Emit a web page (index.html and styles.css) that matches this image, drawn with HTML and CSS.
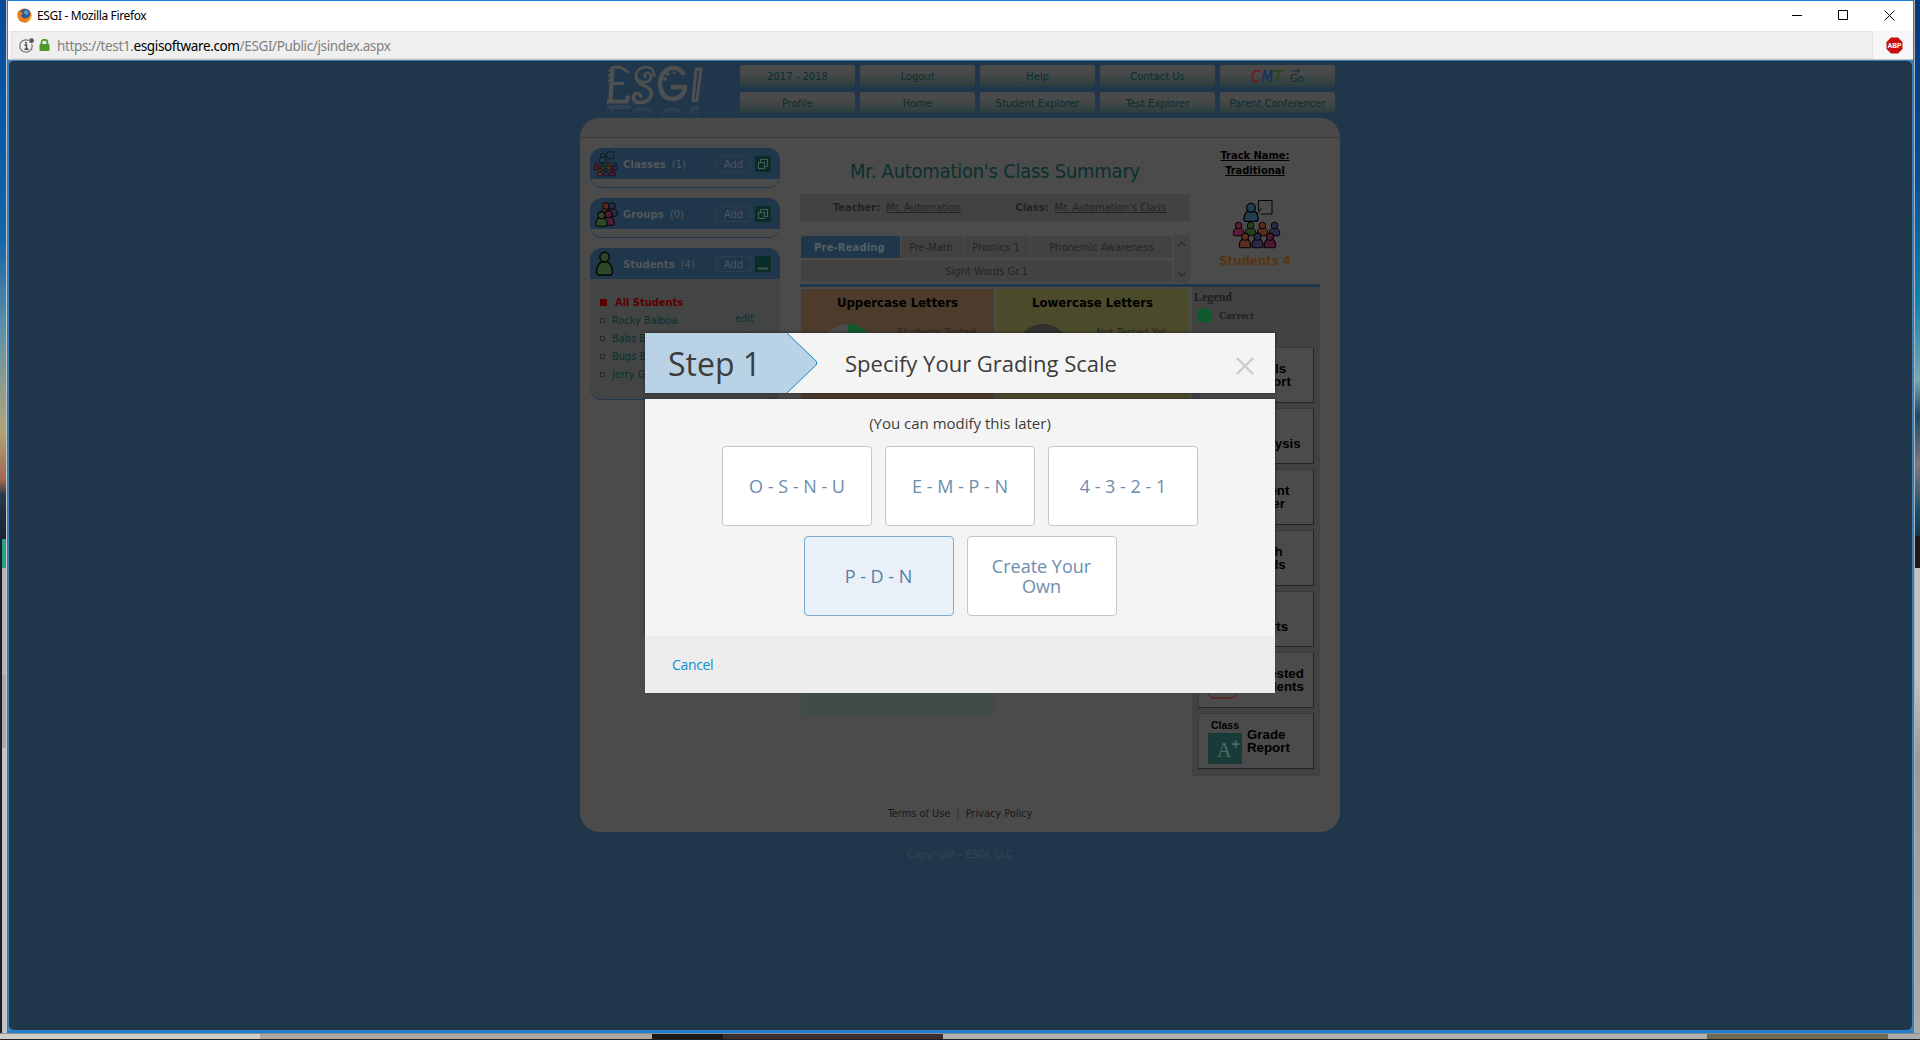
FILE: index.html
```html
<!DOCTYPE html>
<html lang="en">
<head>
<meta charset="utf-8">
<title>ESGI</title>
<link rel="stylesheet" href="styles.css">
</head>
<body>
<svg class="defs" width="0" height="0">
  <defs>
    <symbol id="person" viewBox="0 0 12 15"><path d="M3.3 6.6C1.2 8 .7 10.6.7 12.6q0 1.6 1.5 1.6h7.6q1.5 0 1.5-1.6C11.3 10.6 10.8 8 8.7 6.6z"/><circle cx="6" cy="4" r="3.3"/></symbol>
    <symbol id="class" viewBox="0 0 50 51">
      <path d="M26.500 1.500h13.500v13.500h-11M26.500 1.500v10M29.500 9l-5 7" fill="none" stroke="#050505"/>
      <g stroke="#050505" stroke-width="1">
      <use href="#person" x="11" y="3.500" width="16" height="20" fill="#1f3e50"/>
      <g fill="#5b1c35"><use href="#person" x="0.500" y="21" width="12" height="18"/></g>
      <g fill="#243f22"><use href="#person" x="12.500" y="21" width="12" height="18"/></g>
      <g fill="#5a2d1c"><use href="#person" x="24.500" y="21" width="12" height="18"/></g>
      <g fill="#2a2a48"><use href="#person" x="36.500" y="21" width="12" height="18"/></g>
      <g fill="#5a2d1c"><use href="#person" x="6.500" y="32" width="13" height="19"/></g>
      <g fill="#2a2a48"><use href="#person" x="19" y="32" width="13" height="19"/></g>
      <g fill="#4e1830"><use href="#person" x="31.500" y="32" width="13" height="19"/></g>
      </g>
    </symbol>
    <symbol id="windows" viewBox="0 0 16 16"><rect width="16" height="16" fill="#092e2a"/><path d="M5.500 6V3.500h7v7h-2M3.500 6.500h6v6h-6z" fill="none" stroke="#49605a"/></symbol>
  </defs>
</svg>
<div class="desktop">
  <div class="edge edge-left"></div>
  <div class="window">
    <div class="titlebar">
      <svg width="15" height="15" viewBox="0 0 15 15"><circle cx="7.500" cy="7.500" r="7" fill="#e8641b"/><circle cx="8" cy="6" r="5" fill="#24599e"/><path d="M8 2q4 1 3.500 4Q9 8 7 5z" fill="#4ba7d5"/><path d="M.6 5Q1 3 3 2q0 2 3 3 0 2-2 2 1 4 6 3 3-1 3.500-5 2 9-6 9.500Q0 14 .6 5z" fill="#ee7a1d"/><path d="M10 13q4-2 4-7 1 5-2 7z" fill="#ffd64a"/></svg>
      <span class="wtitle">ESGI - Mozilla Firefox</span>
      <span class="controls">
        <svg width="11" height="11"><path d="M0 5.500h10" stroke="#000"/></svg>
        <svg width="11" height="11"><path d="M.5.500h9v9h-9z" fill="none" stroke="#000"/></svg>
        <svg width="11" height="11"><path d="M.5.500l10 10M10.500.500l-10 10" stroke="#000"/></svg>
      </span>
    </div>
    <div class="urlbar">
      <div class="address">
        <svg width="16" height="15" viewBox="0 0 16 15"><circle cx="7" cy="8" r="6.200" fill="none" stroke="#777" stroke-width="1.300"/><path d="M5.500 7H7.500v4M5.500 11.300h4" stroke="#444" stroke-width="1.400" fill="none"/><circle cx="7" cy="4.700" r="1" fill="#444"/><circle cx="12.500" cy="2.700" r="3" fill="#eee"/><circle cx="12.500" cy="2.700" r="2.400" fill="#555"/></svg>
        <svg class="lock" width="11" height="12" viewBox="0 0 11 12"><path d="M2.500 6V3.500q0-2.700 3-2.700t3 2.700V6" fill="none" stroke="#4e9a28" stroke-width="1.700"/><rect x=".5" y="5" width="10" height="7" rx="1" fill="#4e9a28"/></svg>
        <span class="url">https://test1.<b>esgisoftware.com</b>/ESGI/Public/jsindex.aspx</span>
      </div>
      <svg class="abp" width="17" height="17" viewBox="0 0 17 17"><path d="M5 0.500h7L16.500 5v7L12 16.500H5L.5 12V5z" fill="#c70d0d"/><text x="8.500" y="11.200" text-anchor="middle" textLength="14" lengthAdjust="spacingAndGlyphs">ABP</text></svg>
    </div>
    <div class="page">
      <div class="site">
        <header class="top">
          <svg class="logo" width="104" height="53" viewBox="0 0 104 53">
            <defs><linearGradient id="fade" gradientUnits="userSpaceOnUse" x1="0" y1="39" x2="0" y2="53"><stop offset="0" stop-color="#4a5358" stop-opacity=".5"/><stop offset="1" stop-color="#4a5358" stop-opacity="0"/></linearGradient></defs>
            <g fill="none" stroke="#4d4f50" stroke-linejoin="round">
              <path d="M8.500 2L6.500 36" stroke-width="4.500"/>
              <path d="M8 2.500Q18 0 24.500 8M9 18.500h11" stroke-width="3"/>
              <path d="M3 36.500h20l1-6" stroke-width="4"/>
              <path d="M4 5.500h4M4 10.500h4M4 15.500h4" stroke-width="2"/>
              <path d="M42 13q-3-3 0-5 5-1 5 4-1 6-8 5-8-2-7-8 2-7 11-7 8 1 7 10" stroke-width="2.600"/>
              <path d="M32 12q2 7 11 10 7 4 3 11-5 6-14 4-5-4-1-8 6-2 6 4" stroke-width="3.600"/>
              <path d="M80 10Q76 2 67 3 56 7 56 19q1 15 13 15 11-1 12-12H67" stroke-width="4.500"/>
              <path d="M92 4L89 35.500h4L97 4z" stroke-width="3"/>
            </g>
            <g fill="#4d4f50"><circle cx="61" cy="14" r="2"/><circle cx="64" cy="9" r="1.800"/><circle cx="70" cy="8" r="1.500"/></g>
            <g fill="none" stroke="url(#fade)" stroke-width="4"><path d="M3 42h22v2M7 42v10M31 51q-3-6 5-7 8-1 12 5M36 51q3-2 3 2M57 51q10-13 24 0M90 42.500h4M88 42v10M93 42v10"/></g>
          </svg>
          <nav class="menu">
            <a>2017 - 2018</a><a>Logout</a><a>Help</a><a>Contact Us</a><a class="cmt"><i><b class="c">C</b><b class="m">M</b><b class="t">T</b></i><span class="go">Go<svg width="10" height="4"><path d="M0 2h8M6 0l3 2-3 2" stroke="#0c302e" fill="none"/></svg></span></a>
            <a>Profile</a><a>Home</a><a>Student Explorer</a><a>Test Explorer</a><a>Parent Conferencer</a>
          </nav>
        </header>
        <main class="card">
          <div class="cardtop"></div>
          <div class="columns">
            <aside class="left">
              <section class="panel">
                <h3><svg class="pi" width="26" height="26"><use href="#class"/></svg><b>Classes</b><em>(1)</em><button>Add</button><svg width="16" height="16"><use href="#windows"/></svg></h3>
              </section>
              <section class="panel">
                <h3><svg class="pi" width="26" height="26" viewBox="0 0 26 26" stroke="#050505"><use href="#person" x="7" y="0" width="12" height="17" fill="#5a2d1c"/><use href="#person" x="13" y="0" width="12" height="17" fill="#2a2a48"/><use href="#person" x="9" y="8" width="13" height="18" fill="#541c34"/><use href="#person" x="2" y="9" width="13" height="18" fill="#2b4827"/></svg><b>Groups</b><em>(0)</em><button>Add</button><svg width="16" height="16"><use href="#windows"/></svg></h3>
              </section>
              <section class="panel students">
                <h3><svg class="pi" width="26" height="26" viewBox="0 0 26 26" fill="#2b4827" stroke="#050505" stroke-width="1.500"><path d="M8 11Q3.500 15 3.500 21q0 3 3 3h10q3 0 3-3 0-6-4.500-10z"/><circle cx="11.500" cy="6" r="4.700"/></svg><b>Students</b><em>(4)</em><button>Add</button><svg width="16" height="16"><rect width="16" height="16" fill="#092e2a"/><path d="M3 12.500h10" stroke="#3f5853" stroke-width="2"/></svg></h3>
                <ul>
                  <li class="all">All Students</li>
                  <li>Rocky Balboa<u>edit</u></li>
                  <li>Babs B<u>edit</u></li>
                  <li>Bugs B</li>
                  <li>Jerry G</li>
                </ul>
              </section>
            </aside>
            <div class="right">
              <div class="headrow">
                <div class="summary">
                  <h1>Mr. Automation's Class Summary</h1>
                  <div class="who"><p><b>Teacher:</b><u>Mr. Automation</u></p><p><b>Class:</b><u>Mr. Automation's Class</u></p></div>
                  <div class="tabs">
                    <div class="tabrows">
                      <div class="tabrow"><a class="on">Pre-Reading</a><a class="t2">Pre-Math</a><a class="t3">Phonics 1</a><a class="t4">Phonemic Awareness</a></div>
                      <div class="tabrow"><a class="t5">Sight Words Gr.1</a></div>
                    </div>
                    <svg class="scroll" width="16" height="48"><path d="M4.500 11L8 7.500l3.500 3.500M4.500 37.500L8 41l3.500-3.500" fill="none" stroke="#2f2f2f" stroke-width="1.600"/></svg>
                  </div>
                </div>
                <div class="track">
                  <b class="name">Track Name:<br>Traditional</b>
                  <svg width="50" height="51"><use href="#class"/></svg>
                  <b class="count">Students 4</b>
                </div>
              </div>
              <div class="board">
                <div class="tests">
                  <div class="test upper"><b>Uppercase Letters</b><div><svg width="56" height="50" viewBox="0 0 56 50"><circle cx="28" cy="28" r="27" fill="#4c4c4c"/><path d="M28 28V1a27 27 0 0 1 27 27z" fill="#0e5a2a"/></svg><span>Students Tested</span></div></div>
                  <div class="test lower"><b>Lowercase Letters</b><div><svg width="56" height="50" viewBox="0 0 56 50"><circle cx="28" cy="28" r="27" fill="#303030"/></svg><span>Not Tested Yet</span></div></div>
                  <div class="test teal"></div>
                </div>
                <div class="reports">
                  <div class="legend"><b>Legend</b><p><i></i>Correct</p></div>
                  <a class="r"><span>Totals<br>Report</span></a>
                  <a class="r low"><span>Analysis</span></a>
                  <a class="r"><span>Parent<br>Letter</span></a>
                  <a class="r"><span>Flash<br>Cards</span></a>
                  <a class="r low"><span>Charts</span></a>
                  <a class="r un"><svg width="29" height="30"><rect x="1" y="1" width="27" height="28" rx="5" fill="none" stroke="#572d22" stroke-width="2"/></svg><span>Untested<br>Students</span></a>
                  <a class="r grade"><span class="pic"><small>Class</small><strong>A<sup>+</sup></strong></span><span>Grade<br>Report</span></a>
                </div>
              </div>
            </div>
          </div>
          <p class="links">Terms of Use<s>|</s>Privacy Policy</p>
        </main>
        <p class="copy">Copyright - ESGI, LLC</p>
      </div>
    </div>
  </div>
  <div class="edge edge-right"></div>
  <div class="taskline"></div>
</div>
<div class="modal">
  <div class="mhead">
    <svg class="step" width="175" height="60"><path d="M0 0h142l30 28.500v3L142 60H0z" fill="#bad2e5"/><path d="M142 0l29.500 28.500v3L142 60" fill="none" stroke="#168ccb"/></svg>
    <span class="stepname">Step 1</span>
    <h2>Specify Your Grading Scale</h2>
    <svg class="x" width="18" height="18"><path d="M1 1l16 16M17 1L1 17" stroke="#cbcbcb" stroke-width="2.400"/></svg>
  </div>
  <div class="mbody">
    <p>(You can modify this later)</p>
    <div class="choices"><button>O - S - N - U</button><button>E - M - P - N</button><button>4 - 3 - 2 - 1</button></div>
    <div class="choices"><button class="sel">P - D - N</button><button>Create Your<br>Own</button></div>
  </div>
  <div class="mfoot"><a>Cancel</a></div>
</div>
</body>
</html>
```
FILE: styles.css
```css
*, *::before { box-sizing: border-box; }
body { margin: 0; width: 1920px; height: 1040px; overflow: hidden; position: relative; font-family: "DejaVu Sans Condensed", "DejaVu Sans", sans-serif; font-size: 11px; }
p, h1, h2, h3, ul { margin: 0; padding: 0; font-weight: normal; }
svg { display: block; flex: none; }
.defs { position: absolute; }
.desktop { display: grid; grid-template: 1033px 7px / 7px 1907px 6px; width: 1920px; height: 1040px; }
.edge-left { border-right: 1px solid #c9c9c9; background: linear-gradient(90deg, #181c2b 0 2px, transparent 2px) 0 539px / 100% 494px no-repeat, linear-gradient(#064a96 0, #0859a8 130px, #1565a8 240px, #5e91a8 330px, #b0a577 430px, #a3674e 480px, #273a4c 495px, #172334 539px, #279f86 539px 568px, #b8b4b1 568px 675px, #aaa7a5 675px 748px, #c5c2bf 748px); }
.edge-right { border-left: 1px solid #b0b0b0; background: linear-gradient(#04357d 0, #075095 180px, #1182b2 300px, #74a8b2 380px, #1b496a 415px, #7e7982 465px, #1a506d 510px, #15354a 536px, #1b171b 536px 568px, #c1c1c1 568px 680px, #999 760px, #aaa 1033px); }
.taskline { grid-column: 1 / 4; border-top: 1px solid #8c8c8c; border-bottom: 1px solid #202020; background: linear-gradient(90deg, #cfcdc7 0 260px, #aaa7a0 260px 652px, #191719 652px 723px, #3a2c34 723px 943px, #b0b0b0 943px 1707px, #6e6952 1707px 1888px, #aaa 1888px); }
.window { border: 1px solid #1b7ed3; border-width: 1px 1px 2px; display: flex; flex-direction: column; background: #3a82bd; }
.titlebar { height: 30px; background: #fff; display: flex; align-items: center; padding: 0 18px 2px 9px; }
.wtitle { font: 12px "Noto Sans", sans-serif; letter-spacing: -.36px; margin-left: 5px; color: #000; }
.controls { margin-left: auto; display: flex; gap: 35px; }
.urlbar { height: 29px; background: #f6f6f6; display: flex; align-items: center; border-bottom: 1px solid #c4c4c4; }
.address { width: 1862px; height: 28px; margin-left: 3px; background: #efefef; border: 1px solid #e2e2e2; display: flex; align-items: center; padding-left: 7px; }
.lock { margin-left: 4px; }
.url { margin-left: 7px; padding-top: 2px; font: 13.500px "Noto Sans", sans-serif; letter-spacing: -.37px; color: #818181; }
.url b { font-weight: normal; color: #000; }
.abp { margin-left: 13px; }
.abp text { font: bold 7px "Liberation Sans", sans-serif; fill: #fff; }
.page { flex: 1; margin: 1px; border-radius: 5px; background: #20364a; padding-top: 4px; }
.site { width: 760px; margin-left: 571px; }
.top { display: flex; height: 53px; }
.logo { margin-left: 24px; margin-right: 32px; }
.menu { display: grid; grid-template-columns: repeat(5, 115px); grid-template-rows: 22px 21px; gap: 5px; }
.menu a { border-radius: 3px; background: linear-gradient(#4a4a4a 35%, #2a3d3e); color: #0a2f2e; display: flex; align-items: center; justify-content: center; padding-top: 1px; font-size: 11.200px; letter-spacing: -.05px; }
.cmt { gap: 7px; }
.cmt b { font-size: 15px; font-weight: normal; letter-spacing: .8px; -webkit-text-stroke: .6px currentColor; }
.c { color: #6c2028; } .m { color: #1b315a; } .t { color: #244a1d; }
.go { position: relative; padding-top: 3px; }
.go svg { position: absolute; top: 0; left: 1px; }
.card { height: 714px; border-radius: 20px; background: #4b4b4b; position: relative; overflow: hidden; }
.cardtop { height: 20px; border-bottom: 1px solid #353939; background: #494949; }
.columns { display: flex; padding: 10px 20px 0 10px; height: 640px; }
.left { width: 190px; display: flex; flex-direction: column; gap: 10px; }
.panel { height: 40px; border-radius: 12px; border-bottom: 1px solid #20364a; overflow: hidden; flex: none; }
.panel h3 { height: 31px; background: #20364a; display: flex; align-items: center; font-size: 11px; color: #51585c; padding: 1px 9px 0 3px; }
.panel h3 b { margin-left: 4px; font-size: 11.300px; }
.panel h3 em { font-style: normal; margin-left: 6px; flex: 1; }
.panel button { width: 35px; height: 16px; border: 1px solid #2b424d; border-radius: 2px; background: none; color: #4d565a; font: 11px "DejaVu Sans Condensed", sans-serif; padding: 0; margin-right: 4px; }
.students { height: 152px; background: #434545; }
.students ul { list-style: none; padding: 14px 26px 0 10px; }
.students li { height: 18px; display: flex; align-items: center; color: #0a302e; letter-spacing: -.05px; }
.students li::before { content: ""; width: 5px; height: 5px; border: 1px solid #292929; margin-right: 7px; }
.students li.all { color: #5b0000; font-weight: bold; font-size: 11.200px; letter-spacing: -.1px; }
.students li.all::before { width: 7px; height: 7px; background: #5b0000; border: 0; margin-right: 8px; }
.students u { text-decoration: none; margin-left: auto; margin-top: -4px; }
.right { width: 520px; margin-left: 20px; }
.headrow { display: flex; height: 136px; }
.summary { width: 390px; }
h1 { height: 46px; line-height: 47px; text-align: center; font-size: 20px; letter-spacing: -.25px; color: #0a302e; }
.who { height: 27px; background: #424242; display: flex; align-items: center; color: #222; padding: 0 24px 0 33px; justify-content: space-between; }
.who b { margin-right: 6px; }
.who u { letter-spacing: -.05px; }
.tabs { display: flex; margin-top: 14px; gap: 2px; }
.tabrows { width: 371px; margin-left: 1px; display: flex; flex-direction: column; gap: 2px; padding-top: 1px; }
.tabrow { display: flex; gap: 1px; }
.tabrow a { height: 22px; background: #424242; border-radius: 3px 3px 0 0; color: #252525; display: flex; align-items: center; justify-content: center; padding-top: 1px; }
.tabrow .on { width: 99px; background: #20364a; color: #536068; font-weight: bold; letter-spacing: .2px; padding-right: 2px; }
.tabrow .t2 { width: 63px; padding-right: 3px; } .tabrow .t3 { width: 65px; padding-right: 3px; } .t4 { width: 141px; } .t5 { width: 371px; }
.scroll { background: #444; }
.track { width: 130px; display: flex; flex-direction: column; align-items: center; font-size: 11px; }
.name { text-decoration: underline; line-height: 15px; text-align: center; color: #000; }
.track svg { margin: 21px 0 3px 3px; }
.count { font-size: 13px; color: #573510; }
.board { display: flex; border-top: 3px solid #20364a; }
.tests { display: grid; grid-template: 220px 203px / 193px 193px; gap: 2px; padding: 2px 1px 0; }
.test { padding-top: 6px; text-align: center; font-size: 13px; color: #000; }
.test div { display: flex; padding: 13px 18px 0 19px; justify-content: space-between; font-size: 11px; color: #2c2620; }
.lower div { padding-right: 23px; }
.test span { padding-top: 3px; }
.upper { background: #4d3b2c; } .lower { background: #4b4b2c; } .teal { background: #3f4c4a; }
.reports { width: 128px; height: 489px; margin-left: 2px; background: #424242; padding: 1px 6px; display: flex; flex-direction: column; gap: 5px; }
.legend { height: 54px; font: 10.500px "Liberation Serif", serif; color: #1e1e1e; padding-top: 2px; }
.legend b { font-size: 12px; margin-left: -4px; }
.legend p { display: flex; align-items: center; gap: 8px; margin-top: 4px; font-weight: bold; }
.legend i { width: 13px; height: 13px; background: #0e5a2a; }
.r { height: 56px; background: #4b4b4b; border: 1px solid #393939; border-right-color: #232323; border-bottom-color: #232323; display: flex; align-items: center; padding-left: 49px; font: bold 13.300px/13px "Liberation Sans", sans-serif; color: #000; }
.low { padding-top: 14px; padding-left: 47px; }
.un { padding-left: 9px; padding-top: 0; gap: 10px; }
.un svg { margin-top: 7px; }
.grade { padding: 0 0 0 9px; gap: 5px; }
.pic { width: 34px; height: 46px; display: flex; flex-direction: column; }
.pic small { font-size: 10.500px; line-height: 15px; padding-left: 3px; }
.pic strong { height: 31px; background: #193b37; color: #4f6b66; font: 20px/34px "Liberation Serif", serif; padding-left: 9px; white-space: nowrap; }
.pic sup { font: bold 14px/0 "Liberation Sans", sans-serif; }
.links { text-align: center; margin-top: 29px; color: #191919; letter-spacing: -.05px; }
.links s { text-decoration: none; margin: 0 6px; color: #2c2c2c; }
.copy { text-align: center; margin-top: 16px; color: #364653; }
.modal { position: absolute; left: 645px; top: 333px; width: 630px; height: 360px; font-family: "Open Sans", sans-serif; color: #3c3c3c; }
.mhead { height: 60px; background: #f4f4f4; display: flex; align-items: center; position: relative; box-shadow: 0 0 3px #222; }
.step { position: absolute; left: 0; top: 0; }
.stepname { position: relative; width: 200px; padding-left: 23px; font-size: 32px; }
.mhead h2 { font-size: 22px; flex: 1; }
.x { margin: 5px 21px 0 0; }
.mbody { margin-top: 6px; height: 237px; background: #f4f4f4; padding-top: 14px; text-align: center; font-size: 15px; box-shadow: 0 0 3px #222; position: relative; }
.mbody p { height: 23px; line-height: 20px; }
.choices { display: flex; justify-content: center; gap: 13px; margin-top: 10px; }
.choices button { width: 150px; height: 80px; border: 1px solid #c6c6c6; border-radius: 4px; background: #fff; color: #6d8dac; font: 18px/20px "Open Sans", sans-serif; padding: 0; }
.choices .sel { background: #e9f0f7; border-color: #7daad0; color: #587fa5; }
.mfoot { height: 57px; background: #ededed; display: flex; align-items: center; padding-left: 27px; font-size: 14px; letter-spacing: -.35px; color: #0c8fd0; position: relative; }
```
